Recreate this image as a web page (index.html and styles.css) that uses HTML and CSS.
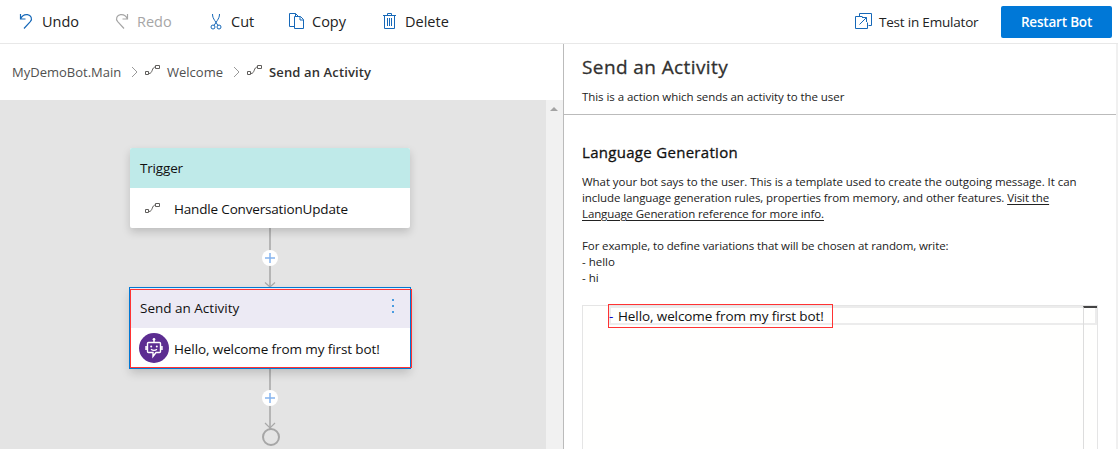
FILE: index.html
```html
<!DOCTYPE html>
<html lang="en">
<head>
<meta charset="utf-8">
<title>MyDemoBot</title>
<link rel="stylesheet" href="styles.css">
</head>
<body>
<svg width="0" height="0" class="defs">
  <symbol id="flow" viewBox="0 0 15 12"><path d="M.5 7.500h3v3h-3zM10.500 1.500h4v3h-4zM4 9.500c4 0 2.500-6.500 6.500-6.500" fill="none" stroke="currentColor"/></symbol>
  <symbol id="chev" viewBox="0 0 7 12"><path d="M1 1l5 5-5 5" fill="none" stroke="currentColor"/></symbol>
</svg>
<div class="app">
  <header class="toolbar">
    <button class="cmd undo"><svg width="14" height="17"><path d="M1.500 1v5h5M1.500 6C3 2.500 6 1.300 8.500 1.600c3.500.4 5.300 4.200 2.800 7.100L5 15.500" fill="none" stroke="currentColor" stroke-width="1.200"/></svg><span>Undo</span></button>
    <button class="cmd redo"><svg width="14" height="17"><path d="M12.500 1v5h-5M12.500 6C11 2.500 8 1.300 5.500 1.600 2 2 .2 5.800 2.700 8.700L9 15.500" fill="none" stroke="currentColor" stroke-width="1.200"/></svg><span>Redo</span></button>
    <button class="cmd cut"><svg width="12" height="17"><g fill="none" stroke="currentColor"><path d="M2.500 1c0 3 1 4.500 2.200 6.500l3.300 5M9.500 1c0 3-1 4.500-2.200 6.500L4 12.500"/><circle cx="3" cy="14" r="2"/><circle cx="9" cy="14" r="2"/></g></svg><span>Cut</span></button>
    <button class="cmd copy"><svg width="16" height="17"><path d="M5.500 13.500h-5V.5h6l3 3M5.500 3.500h6l3 3v9h-9zM11 3.500v3.500h3.500M6.500.5v3" fill="none" stroke="currentColor"/></svg><span>Copy</span></button>
    <button class="cmd delete"><svg width="13" height="17"><path d="M0 2.500h13M4.500 2.500v-2h4v2M1.500 2.500v13h10v-13M4.500 5v8M6.500 5v8M8.500 5v8" fill="none" stroke="currentColor"/></svg><span>Delete</span></button>
    <button class="cmd test"><svg width="17" height="17"><path d="M4.500 3.500v-3h12v12h-3M7.500 3.500h-7v12h12v-6M4.500 11.500l7-7M7 4.500h4.500V9" fill="none" stroke="currentColor"/></svg><span>Test in Emulator</span></button>
    <button class="restart"><span>Restart Bot</span></button>
  </header>
  <div class="body">
    <main class="left">
      <nav class="crumbs">
        <span class="c1">MyDemoBot.Main</span>
        <svg class="chev" width="7" height="12"><use href="#chev"/></svg>
        <svg class="flow" width="15" height="12"><use href="#flow"/></svg>
        <span class="c2">Welcome</span>
        <svg class="chev" width="7" height="12"><use href="#chev"/></svg>
        <svg class="flow" width="15" height="12"><use href="#flow"/></svg>
        <span class="c3">Send an Activity</span>
      </nav>
      <div class="canvas">
        <svg class="edges" width="546" height="349">
          <g fill="none" stroke="#b5b5b5"><path d="M270 128v59M270 269v60" stroke-width="2"/><path d="M265 182.500l5 4.500 5-4.500M265 323l5 5 5-5" stroke="#a8a8a8" stroke-width="1.200"/></g>
          <circle cx="271" cy="337" r="8" fill="none" stroke="#a6a6a6" stroke-width="2"/>
          <g class="plus"><circle cx="270" cy="158" r="8"/><path d="M270 153v10M265 158h10"/></g>
          <g class="plus"><circle cx="270" cy="298" r="8"/><path d="M270 293v10M265 298h10"/></g>
        </svg>
        <section class="node trigger">
          <div class="head"><span class="t1">Trigger</span></div>
          <div class="row"><svg class="flow" width="15" height="12"><use href="#flow"/></svg><span class="t2">Handle ConversationUpdate</span></div>
        </section>
        <section class="node activity">
          <div class="head"><span class="t3">Send an Activity</span><svg width="2" height="14" fill="#4a9ce0"><path d="M0 0h2v2H0zM0 6h2v2H0zM0 12h2v2H0z"/></svg></div>
          <div class="row"><svg class="bot" width="30" height="30"><circle cx="15" cy="15" r="15" fill="#5c2d91"/><g fill="none" stroke="#fff" stroke-width="1.400"><path d="M9.500 9.500h11q1 0 1 1v8q0 1-1 1H17l-3 4v-4H9.500q-1 0-1-1v-8q0-1 1-1zM15 9.500V6.500M7 13v4M23 13v4M12 16.200q3 2.300 6 0"/></g><g fill="#fff"><circle cx="15" cy="6.200" r="1.300"/><circle cx="12.200" cy="13.500" r="1"/><circle cx="17.800" cy="13.500" r="1"/></g></svg><span class="t4">Hello, welcome from my first bot!</span></div>
          <div class="mark"></div>
        </section>
        <div class="scroll"><svg width="8" height="4"><path d="M4 0l4 4H0z" fill="#a3a3a3"/></svg></div>
      </div>
    </main>
    <aside class="panel">
      <div class="title">
        <h1><span>Send an Activity</span></h1>
        <p><span class="p1">This is a action which sends an activity to the user</span></p>
      </div>
      <div class="form">
        <h2><span>Language Generation</span></h2>
        <p><span class="l1">What your bot says to the user. This is a template used to create the outgoing message. It can</span><br><span class="l2">include language generation rules, properties from memory, and other features. <u>Visit the</u></span><br><u class="l3">Language Generation reference for more info.</u><br><br><span class="l4">For example, to define variations that will be chosen at random, write:</span><br>- hello<br>- hi</p>
        <div class="editor">
          <div class="line"></div>
          <div class="ruler"></div>
          <div class="code"><b>-</b><span class="t5">Hello, welcome from my first bot!</span></div>
        </div>
      </div>
    </aside>
  </div>
</div>
</body>
</html>
```
FILE: styles.css
```css
* { box-sizing: border-box; }
body { margin: 0; font-family: "Open Sans", "Noto Sans", sans-serif; font-size: 13.500px; color: #222; background: #fff; }
span, u { white-space: nowrap; }
svg { display: block; flex: none; }
.defs { position: absolute; }
.app { display: flex; flex-direction: column; width: 1118px; height: 449px; overflow: hidden; }
.toolbar { display: flex; align-items: center; height: 44px; flex: none; border-bottom: 1px solid #e8e8e8; padding-left: 19px; }
button { border: 0; background: none; padding: 0; font: inherit; color: #222; display: flex; align-items: center; height: 32px; }
.cmd { font-size: 14.500px; gap: 9px; }
.cmd svg { color: #1668b8; }
.undo { width: 96px; }
.redo { width: 95px; }
.redo, .redo svg { color: #a6a6a6; }
.redo { gap: 8px; }
.cut { width: 79px; }
.copy { width: 94px; gap: 7px; }
.delete { width: 472px; }
.test { width: 146px; gap: 7px; font-size: 13.500px; letter-spacing: -.2px; }
.restart { width: 111px; background: #0078d7; color: #fff; font-weight: 600; justify-content: center; border-radius: 2px; font-size: 13.500px; letter-spacing: -.2px; }
.body { display: flex; flex: 1; min-height: 0; }
.left { width: 563px; flex: none; display: flex; flex-direction: column; }
.crumbs { height: 56px; flex: none; display: flex; align-items: center; padding-left: 12px; color: #505050; font-size: 13px; }
.crumbs .chev { color: #999; }
.flow { color: #605e5c; }
.c1 { width: 119px; }
.crumbs .flow { margin: -4px 7px 0 7px; }
.c2 { width: 66px; }
.c3 { font-weight: 600; color: #323130; letter-spacing: .13px; }
.canvas { flex: 1; position: relative; background: #e4e4e4; overflow: hidden; }
.edges { position: absolute; left: 0; top: 0; }
.plus circle { fill: #fff; }
.plus path { stroke: #85b4ee; stroke-width: 1.500; }
.node { position: absolute; width: 280px; height: 80px; left: 130px; background: #fff; border-radius: 2px; box-shadow: 0 4px 9px rgba(0,0,0,.17); color: #111; }
.trigger { top: 48px; }
.activity { top: 188px; box-shadow: 0 0 0 1px #0078d4, 0 5px 9px rgba(0,0,0,.17); border-radius: 0; }
.head { height: 40px; display: flex; align-items: center; justify-content: space-between; padding: 0 16px 0 10px; background: #bfeae9; border-radius: 2px 2px 0 0; }
.activity .head { background: #eceaf4; border-radius: 0; }
.head svg { margin-top: -4px; }
.row { height: 40px; display: flex; align-items: center; }
.row .flow { margin: 0 14px 0 15px; }
.row .bot { margin: 0 5px 0 9px; }
.row span { padding-top: 2px; }
.t1, .t2 { letter-spacing: -.17px; }
.t4, .t5 { letter-spacing: -.1px; }
.mark { position: absolute; left: 0; top: 1px; width: 282px; height: 79px; border: 1px solid #f33; }
.scroll { position: absolute; right: 0; top: 0; width: 17px; height: 349px; background: #f1f1f1; padding: 7px 0 0 4px; }
.panel { flex: 1; border-left: 1px solid #bbb; border-right: 2px solid #f0f0f0; min-width: 0; }
.title { height: 71px; border-bottom: 1px solid #bbb; padding: 9px 0 0 18px; }
h1 { margin: 0; font-size: 19px; letter-spacing: .4px; font-weight: 500; line-height: 28px; color: #323130; -webkit-text-stroke: .3px; }
.title p { margin: 8px 0 0; font-size: 11.500px; line-height: 16px; letter-spacing: -.06px; }
.form { padding: 27px 18px 0; }
h2 { margin: 0; font-size: 15px; letter-spacing: .3px; font-weight: 500; line-height: 20px; color: #111; -webkit-text-stroke: .3px; }
.form p { margin: 12px 0 0; font-size: 11.500px; line-height: 16px; height: 112px; color: #222; }
.l1 { letter-spacing: -.055px; }
.l2 { letter-spacing: -.095px; }
.l3, .l4 { letter-spacing: -.11px; }
u { text-underline-offset: 2px; }
.editor { position: relative; height: 150px; margin-top: 19px; border: 1px solid #e5e5e5; background: #fffffe; }
.line { position: absolute; left: 26px; right: 0; top: 0; height: 19px; border: 2px solid #ececec; }
.ruler { position: absolute; right: 0; top: 0; width: 14px; height: 150px; border-left: 1px solid #ddd; border-top: 2px solid #444; }
.code { position: absolute; left: 25px; top: -2px; width: 225px; height: 24px; border: 1px solid #f33; display: flex; align-items: center; padding-left: 0; gap: 4px; color: #111; }
.code b { font-weight: 400; color: #00c; width: 5px; }
```
